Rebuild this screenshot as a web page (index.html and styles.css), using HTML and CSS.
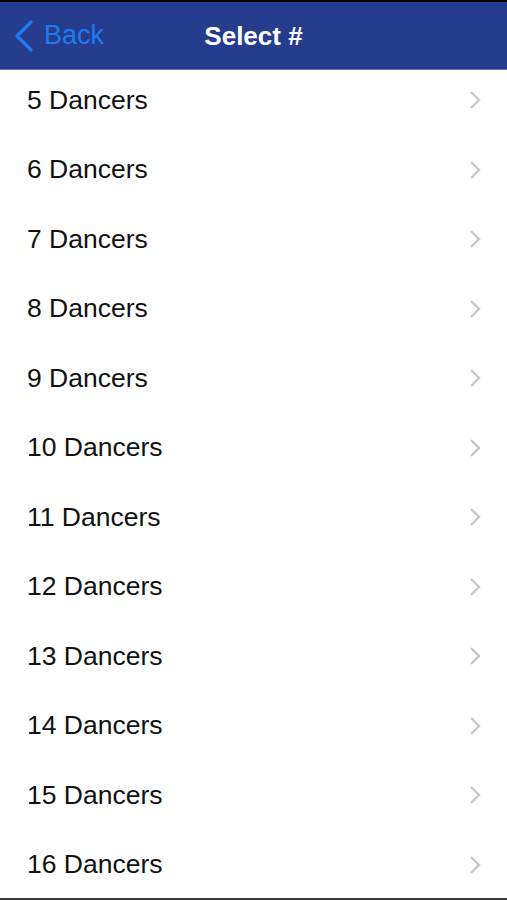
FILE: index.html
```html
<!DOCTYPE html>
<html>
<head>
<meta charset="utf-8">
<link rel="stylesheet" href="styles.css">
</head>
<body>
<div class="screen">
  <header class="navbar">
    <div class="nav-left">
      <svg class="back-icon" width="19" height="32" viewBox="0 0 19 32"><path d="M17 2 L3 16 L17 30" fill="none" stroke="#1f7bf2" stroke-width="3.2" stroke-linecap="round" stroke-linejoin="round"/></svg>
      <span class="back-label">Back</span>
    </div>
    <h1 class="title">Select #</h1>
    <div class="nav-right"></div>
  </header>
  <ul class="list">
    <li class="row"><span class="label">5 Dancers</span><svg class="chev" width="12" height="20" viewBox="0 0 12 20"><path d="M2 2 L10 10 L2 18" fill="none" stroke="#c7c7cc" stroke-width="2.4"/></svg></li>
    <li class="row"><span class="label">6 Dancers</span><svg class="chev" width="12" height="20" viewBox="0 0 12 20"><path d="M2 2 L10 10 L2 18" fill="none" stroke="#c7c7cc" stroke-width="2.4"/></svg></li>
    <li class="row"><span class="label">7 Dancers</span><svg class="chev" width="12" height="20" viewBox="0 0 12 20"><path d="M2 2 L10 10 L2 18" fill="none" stroke="#c7c7cc" stroke-width="2.4"/></svg></li>
    <li class="row"><span class="label">8 Dancers</span><svg class="chev" width="12" height="20" viewBox="0 0 12 20"><path d="M2 2 L10 10 L2 18" fill="none" stroke="#c7c7cc" stroke-width="2.4"/></svg></li>
    <li class="row"><span class="label">9 Dancers</span><svg class="chev" width="12" height="20" viewBox="0 0 12 20"><path d="M2 2 L10 10 L2 18" fill="none" stroke="#c7c7cc" stroke-width="2.4"/></svg></li>
    <li class="row"><span class="label">10 Dancers</span><svg class="chev" width="12" height="20" viewBox="0 0 12 20"><path d="M2 2 L10 10 L2 18" fill="none" stroke="#c7c7cc" stroke-width="2.4"/></svg></li>
    <li class="row"><span class="label">11 Dancers</span><svg class="chev" width="12" height="20" viewBox="0 0 12 20"><path d="M2 2 L10 10 L2 18" fill="none" stroke="#c7c7cc" stroke-width="2.4"/></svg></li>
    <li class="row"><span class="label">12 Dancers</span><svg class="chev" width="12" height="20" viewBox="0 0 12 20"><path d="M2 2 L10 10 L2 18" fill="none" stroke="#c7c7cc" stroke-width="2.4"/></svg></li>
    <li class="row"><span class="label">13 Dancers</span><svg class="chev" width="12" height="20" viewBox="0 0 12 20"><path d="M2 2 L10 10 L2 18" fill="none" stroke="#c7c7cc" stroke-width="2.4"/></svg></li>
    <li class="row"><span class="label">14 Dancers</span><svg class="chev" width="12" height="20" viewBox="0 0 12 20"><path d="M2 2 L10 10 L2 18" fill="none" stroke="#c7c7cc" stroke-width="2.4"/></svg></li>
    <li class="row"><span class="label">15 Dancers</span><svg class="chev" width="12" height="20" viewBox="0 0 12 20"><path d="M2 2 L10 10 L2 18" fill="none" stroke="#c7c7cc" stroke-width="2.4"/></svg></li>
    <li class="row"><span class="label">16 Dancers</span><svg class="chev" width="12" height="20" viewBox="0 0 12 20"><path d="M2 2 L10 10 L2 18" fill="none" stroke="#c7c7cc" stroke-width="2.4"/></svg></li>
  </ul>
</div>
</body>
</html>
```
FILE: styles.css
```css
html, body {
  margin: 0;
  padding: 0;
  background: #ffffff;
}

.screen {
  width: 507px;
  height: 900px;
  box-sizing: border-box;
  border-top: 2px solid #000000;
  border-bottom: 2px solid #3c3c3c;
  display: flex;
  flex-direction: column;
  overflow: hidden;
  font-family: "Liberation Sans", Arial, sans-serif;
}

.navbar {
  flex: 0 0 auto;
  height: 67px;
  background: #263c8d;
  border-bottom: 1px solid #6273b4;
  display: grid;
  grid-template-columns: 1fr auto 1fr;
  align-items: center;
}

.nav-left {
  display: flex;
  align-items: center;
  padding-left: 14px;
  gap: 11px;
}

.back-icon {
  display: block;
  margin-top: 1px;
}

.back-label {
  color: #1f7bf2;
  font-size: 27px;
  line-height: 1;
}

.title {
  margin: 0;
  color: #ffffff;
  font-size: 26px;
  font-weight: bold;
  line-height: 1;
}

.list {
  flex: 1 1 auto;
  min-height: 0;
  margin: 0;
  padding: 0;
  list-style: none;
  overflow: hidden;
}

.row {
  height: 69.5px;
  box-sizing: border-box;
  padding: 0 26px 9.5px 27px;
  display: flex;
  align-items: center;
  justify-content: space-between;
}

.label {
  color: #111111;
  font-size: 26.5px;
  line-height: 1;
}

.chev {
  display: block;
}
```
